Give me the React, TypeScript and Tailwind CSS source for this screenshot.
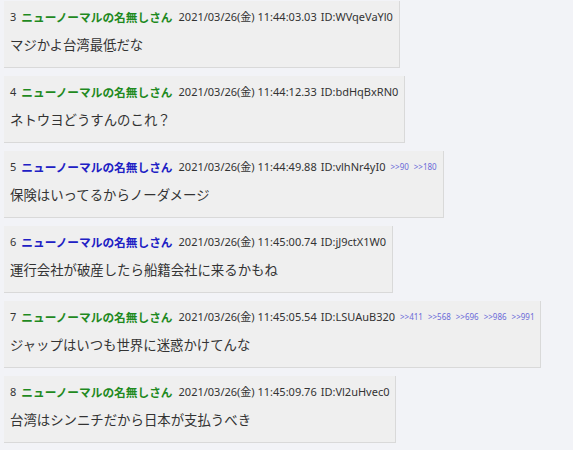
import React from "react";

type Post = {
  no: number;
  date: string;
  id: string;
  blue?: boolean;
  anchors?: string[];
  body: string;
};

const posts: Post[] = [
  { no: 3, date: "2021/03/26(金) 11:44:03.03", id: "ID:WVqeVaYl0", body: "マジかよ台湾最低だな" },
  { no: 4, date: "2021/03/26(金) 11:44:12.33", id: "ID:bdHqBxRN0", body: "ネトウヨどうすんのこれ？" },
  {
    no: 5,
    date: "2021/03/26(金) 11:44:49.88",
    id: "ID:vlhNr4yI0",
    blue: true,
    anchors: [">>90", ">>180"],
    body: "保険はいってるからノーダメージ",
  },
  {
    no: 6,
    date: "2021/03/26(金) 11:45:00.74",
    id: "ID:jJ9ctX1W0",
    blue: true,
    body: "運行会社が破産したら船籍会社に来るかもね",
  },
  {
    no: 7,
    date: "2021/03/26(金) 11:45:05.54",
    id: "ID:LSUAuB320",
    anchors: [">>411", ">>568", ">>696", ">>986", ">>991"],
    body: "ジャップはいつも世界に迷惑かけてんな",
  },
  { no: 8, date: "2021/03/26(金) 11:45:09.76", id: "ID:Vl2uHvec0", body: "台湾はシンニチだから日本が支払うべき" },
];

function PostBox({ post }: { post: Post }) {
  return (
    <div className="mb-[8px] flex">
      <div className="bg-[#efefef] border-b border-r border-[#d9d9d9] pl-[6px] pr-[6px] pt-[8px] pb-[12px]">
        <div className="flex h-[16px] items-center whitespace-nowrap text-[11px] leading-[16px] text-[#333]">
          <span>{post.no}</span>
          <span
            className={
              "ml-[5px] text-[11.7px] font-bold " +
              (post.blue ? "text-[#2020c4]" : "text-[#1f8a1f]")
            }
          >
            ニューノーマルの名無しさん
          </span>
          <span className="ml-[6px]">{post.date}</span>
          <span className="ml-[4px]">{post.id}</span>
          {post.anchors?.map((a) => (
            <span key={a} className="ml-[5px] text-[8px] text-[#6a6ad8]">
              {a}
            </span>
          ))}
        </div>
        <div className="mt-[10px] h-[20px] text-[13.4px] leading-[20px] text-[#333]">
          {post.body}
        </div>
      </div>
    </div>
  );
}

export default function App() {
  return (
    <div
      className="min-h-[450px] bg-[#f2f3f7] pl-[4px] pt-[1px]"
      style={{ fontFamily: '"Noto Sans", "Noto Sans CJK JP", sans-serif' }}
    >
      {posts.map((p) => (
        <PostBox key={p.no} post={p} />
      ))}
    </div>
  );
}
